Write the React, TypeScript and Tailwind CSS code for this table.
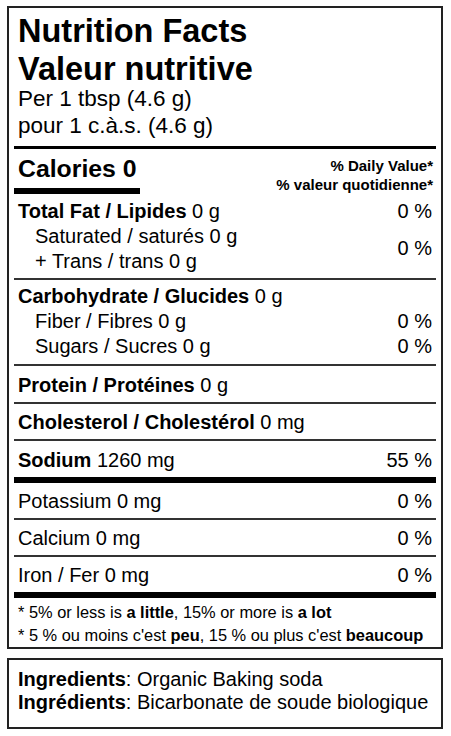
import React from "react";

const font = { fontFamily: '"Liberation Sans", Arial, sans-serif' };

function Rule({ thick = false }: { thick?: boolean }) {
  return thick ? <div className="h-[6px] bg-black" /> : <div className="h-[2px] bg-[#333]" />;
}

function Row({ label, amount, dv }: { label: string; amount: string; dv?: string }) {
  return (
    <div className="flex justify-between px-[4px] pt-[6.5px] pb-[4px] text-[20px] leading-[25px]">
      <span>
        <span className="font-bold">{label}</span> {amount}
      </span>
      {dv && <span>{dv}</span>}
    </div>
  );
}

function PlainRow({ text, dv }: { text: string; dv: string }) {
  return (
    <div className="flex justify-between px-[4px] pt-[6px] pb-[4px] text-[20px] leading-[25px]">
      <span>{text}</span>
      <span>{dv}</span>
    </div>
  );
}

export default function App() {
  return (
    <div className="min-h-screen bg-white text-black pt-[6px] pl-[7px]" style={font}>
      {/* Nutrition table */}
      <div className="w-[436px] border-2 border-[#222] px-[5px]">
        <div className="px-[4px] pt-[4px] pb-[6.5px]">
          <h1 className="text-[32.5px] font-bold leading-[38px]">
            Nutrition Facts
            <br />
            Valeur nutritive
          </h1>
          <p className="-mt-[2px] text-[22.5px] leading-[26.5px]">
            Per 1 tbsp (4.6 g)
            <br />
            pour 1 c.à.s. (4.6 g)
          </p>
        </div>
        <div className="h-[3px] bg-black" />

        <div className="flex items-start justify-between pt-[6.5px]">
          <div>
            <div className="px-[4px] text-[24.8px] font-bold leading-[27.5px]">Calories 0</div>
            <div className="mt-[5px] h-[6px] w-[126px] bg-black" />
          </div>
          <div className="pr-[3px] pt-[0.5px] text-right text-[15px] font-bold leading-[19px]">
            % Daily Value*
            <br />
            % valeur quotidienne*
          </div>
        </div>

        {/* fat */}
        <div className="flex justify-between px-[4px] pt-[5px] pb-[4.5px] text-[20px] leading-[25px]">
          <div>
            <div>
              <span className="font-bold">Total Fat / Lipides</span> 0 g
            </div>
            <div className="pl-[17px]">Saturated / saturés 0 g</div>
            <div className="pl-[17px]">+ Trans / trans 0 g</div>
          </div>
          <div className="flex flex-col">
            <span>0 %</span>
            <span className="mt-[12.5px]">0 %</span>
          </div>
        </div>
        <Rule />

        {/* carbs */}
        <div className="flex justify-between px-[4px] pt-[4px] pb-[5px] text-[20px] leading-[25px]">
          <div>
            <div>
              <span className="font-bold">Carbohydrate / Glucides</span> 0 g
            </div>
            <div className="pl-[17px]">Fiber / Fibres 0 g</div>
            <div className="pl-[17px]">Sugars / Sucres 0 g</div>
          </div>
          <div className="flex flex-col pt-[25px]">
            <span>0 %</span>
            <span>0 %</span>
          </div>
        </div>
        <Rule />

        <Row label="Protein / Protéines" amount="0 g" />
        <Rule />
        <Row label="Cholesterol / Cholestérol" amount="0 mg" />
        <Rule />
        <Row label="Sodium" amount="1260 mg" dv="55 %" />
        <Rule thick />

        <PlainRow text="Potassium 0 mg" dv="0 %" />
        <Rule />
        <PlainRow text="Calcium 0 mg" dv="0 %" />
        <Rule />
        <PlainRow text="Iron / Fer 0 mg" dv="0 %" />
        <Rule thick />

        <div className="px-[4px] pt-[3px] text-[16.4px] leading-[23px]">
          <p>
            * 5% or less is <b>a little</b>, 15% or more is <b>a lot</b>
          </p>
          <p>
            * 5 % ou moins c'est <b>peu</b>, 15 % ou plus c'est <b>beaucoup</b>
          </p>
        </div>
      </div>

      {/* Ingredients */}
      <div className="mt-[9px] w-[436px] border-2 border-[#222] px-[9px] pt-[8.5px] pb-[12.5px] text-[20px] leading-[23px]">
        <p>
          <b>Ingredients</b>: Organic Baking soda
        </p>
        <p>
          <b>Ingrédients</b>: Bicarbonate de soude biologique
        </p>
      </div>
    </div>
  );
}
